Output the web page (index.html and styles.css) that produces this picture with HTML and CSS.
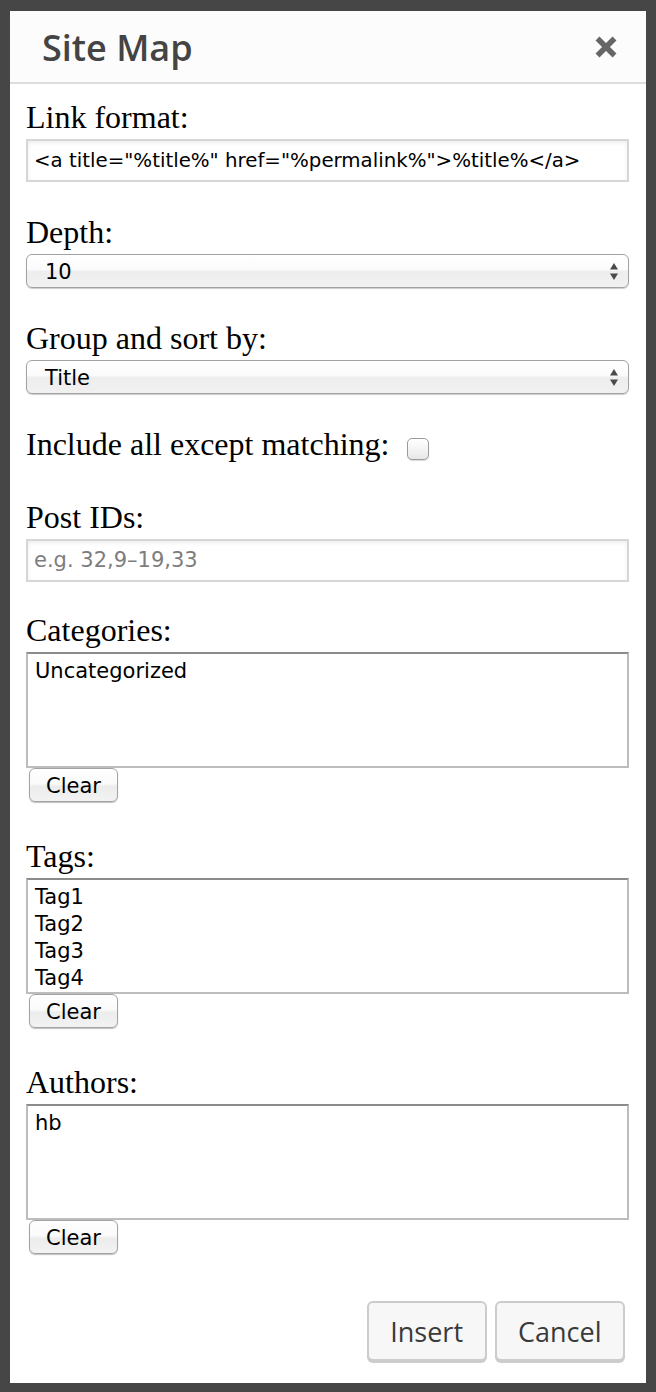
FILE: index.html
```html
<!DOCTYPE html>
<html lang="en">
<head>
<meta charset="utf-8">
<title>Site Map</title>
<link rel="stylesheet" href="styles.css">
</head>
<body>
<div class="dialog" role="dialog" aria-labelledby="dlg-title">
  <header class="dlg-head">
    <h1 id="dlg-title" class="dlg-title">Site Map</h1>
    <button class="dlg-close" aria-label="Close">
      <svg width="24" height="24" viewBox="0 0 24 24" aria-hidden="true"><path d="M3.5 3.5 L20.5 20.5 M20.5 3.5 L3.5 20.5" stroke="#666" stroke-width="5.5" stroke-linecap="butt"/></svg>
    </button>
  </header>

  <div class="dlg-body">
    <div class="field first">
      <label class="lbl" for="f-link">Link format:</label>
      <input id="f-link" class="txt" type="text" value="&lt;a title=&quot;%title%&quot; href=&quot;%permalink%&quot;&gt;%title%&lt;/a&gt;">
    </div>

    <div class="field">
      <div class="lbl">Depth:</div>
      <div class="sel"><span class="sel-val">10</span>
        <svg class="sel-arrows" width="8" height="17" viewBox="0 0 8 17" aria-hidden="true"><path d="M0 6.5 L4 0 L8 6.5 Z M0 10.5 L8 10.5 L4 17 Z" fill="#4a4a4a"/></svg>
      </div>
    </div>

    <div class="field">
      <div class="lbl">Group and sort by:</div>
      <div class="sel"><span class="sel-val">Title</span>
        <svg class="sel-arrows" width="8" height="17" viewBox="0 0 8 17" aria-hidden="true"><path d="M0 6.5 L4 0 L8 6.5 Z M0 10.5 L8 10.5 L4 17 Z" fill="#4a4a4a"/></svg>
      </div>
    </div>

    <div class="field check-row">
      <span class="lbl">Include all except matching:</span>
      <span class="chk" role="checkbox" aria-checked="false"></span>
    </div>

    <div class="field">
      <label class="lbl" for="f-ids">Post IDs:</label>
      <input id="f-ids" class="txt" type="text" placeholder="e.g. 32,9–19,33">
    </div>

    <div class="field list-field first-list">
      <div class="lbl">Categories:</div>
      <div class="lbox" role="listbox">
        <div class="opt">Uncategorized</div>
      </div>
      <button class="clear">Clear</button>
    </div>

    <div class="field list-field">
      <div class="lbl">Tags:</div>
      <div class="lbox" role="listbox">
        <div class="opt">Tag1</div>
        <div class="opt">Tag2</div>
        <div class="opt">Tag3</div>
        <div class="opt">Tag4</div>
      </div>
      <button class="clear">Clear</button>
    </div>

    <div class="field list-field">
      <div class="lbl">Authors:</div>
      <div class="lbox" role="listbox">
        <div class="opt">hb</div>
      </div>
      <button class="clear">Clear</button>
    </div>
  </div>

  <footer class="dlg-foot">
    <button class="btn">Insert</button>
    <button class="btn">Cancel</button>
  </footer>
</div>
</body>
</html>
```

FILE: styles.css
```css
html, body {
  margin: 0;
  padding: 0;
}
body {
  background: #464646;
  width: 656px;
  height: 1392px;
  overflow: hidden;
}
.dialog {
  margin: 11px 0 0 10px;
  width: 636px;
  height: 1372px;
  background: #fff;
  display: flex;
  flex-direction: column;
  box-sizing: border-box;
}
.dlg-head {
  height: 73px;
  box-sizing: border-box;
  background: #fcfcfc;
  border-bottom: 2px solid #dddddd;
  display: flex;
  align-items: center;
  justify-content: space-between;
  padding: 1px 28px 0 32px;
}
.dlg-title {
  margin: 0;
  font-family: "Open Sans", "Noto Sans", sans-serif;
  font-weight: 600;
  font-size: 36px;
  line-height: 49px;
  color: #444;
}
.dlg-close {
  border: 0;
  background: none;
  padding: 0;
  width: 24px;
  height: 24px;
  display: block;
}
.dlg-close svg { display: block; }

.dlg-body {
  padding: 15px 17px 0 16px;
}
.field {
  margin-top: 32px;
}
.field.first { margin-top: 0; }
.field.first-list { margin-top: 30px; }
.list-field { padding-bottom: 4px; }
.lbl {
  display: block;
  font-family: "Liberation Serif", "Times New Roman", serif;
  font-size: 32px;
  line-height: 37px;
  color: #000;
  margin-bottom: 3px;
}
.txt {
  display: block;
  width: 100%;
  height: 43px;
  box-sizing: border-box;
  margin: 0;
  padding: 0 6px;
  border: 2px solid #d6d6d6;
  box-shadow: inset 0 2px 4px rgba(0,0,0,0.07);
  font-family: "DejaVu Sans", "Lucida Grande", sans-serif;
  font-size: 19.8px;
  color: #000;
  background: #fff;
  outline: none;
}
.txt::placeholder {
  color: #7d7d7d;
  font-size: 21px;
}
.sel {
  height: 34px;
  box-sizing: border-box;
  border: 1px solid #a2a2a2;
  border-radius: 6px;
  background: linear-gradient(#ffffff 0%, #fbfbfb 45%, #ededed 52%, #f1f1f1 100%);
  box-shadow: 0 1px 1px rgba(0,0,0,0.2);
  display: flex;
  align-items: center;
  justify-content: space-between;
  padding: 1px 10px 0 18px;
  font-family: "DejaVu Sans", "Lucida Grande", sans-serif;
  font-size: 21px;
  color: #000;
}
.sel-arrows { display: block; margin-top: 0; }

.check-row {
  display: flex;
  align-items: flex-start;
  padding-bottom: 4px;
}
.check-row .lbl { margin-bottom: 0; }
.chk {
  width: 22px;
  height: 22px;
  box-sizing: border-box;
  margin: 12px 0 0 18px;
  border: 1px solid #9b9b9b;
  border-radius: 5px;
  background: linear-gradient(#ffffff, #f4f4f4 50%, #e6e6e6);
  box-shadow: 0 1px 1px rgba(0,0,0,0.15);
}

.lbox {
  height: 116px;
  box-sizing: border-box;
  border: 2px solid #bdbdbd;
  border-top-color: #8b8b8b;
  padding: 4px 7px 0;
  font-family: "DejaVu Sans", "Lucida Grande", sans-serif;
  font-size: 21px;
  color: #000;
  overflow: hidden;
}
.opt { line-height: 27px; }

.clear {
  display: block;
  margin: 0 0 0 3px;
  width: 89px;
  height: 34px;
  box-sizing: border-box;
  border: 1px solid #a3a3a3;
  border-radius: 6px;
  background: linear-gradient(#ffffff 0%, #fafafa 45%, #ececec 55%, #f3f3f3 100%);
  box-shadow: 0 1px 1px rgba(0,0,0,0.25);
  font-family: "DejaVu Sans", "Lucida Grande", sans-serif;
  font-size: 21px;
  color: #000;
  padding: 1px 0 0;
}

.dlg-foot {
  margin-top: auto;
  display: flex;
  justify-content: flex-end;
  gap: 8px;
  padding: 0 21px 22px 0;
}
.btn {
  height: 60px;
  box-sizing: border-box;
  padding: 0 21.5px;
  border: 2px solid #cccccc;
  border-radius: 6px;
  background: #f7f7f7;
  box-shadow: 0 2px 0 #cccccc;
  font-family: "Open Sans", "Noto Sans", sans-serif;
  font-size: 27px;
  color: #3a3a3a;
}
```
